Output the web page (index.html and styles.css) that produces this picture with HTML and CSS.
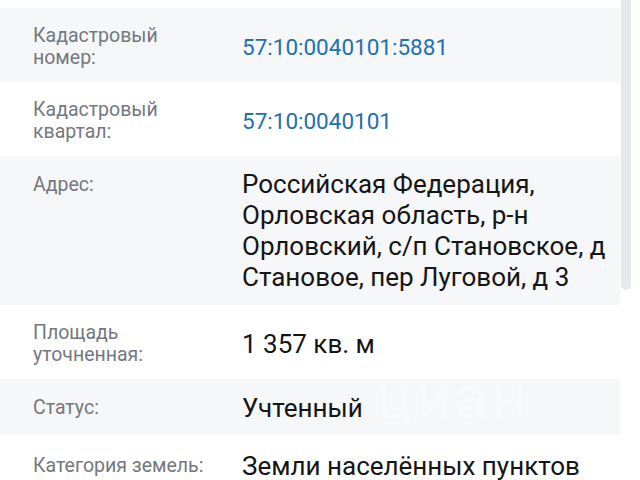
FILE: index.html
```html
<!DOCTYPE html>
<html lang="ru">

<head>
    <meta charset="UTF-8">
    <meta name="viewport" content="width=device-width, initial-scale=1.0">
    <title>Участок</title>
    <link rel="stylesheet" href="styles.css">
</head>

<body>
    <!-- Land plot details -->
    <div class="details">
        <div class="row row-gray">
            <div class="label">Кадастровый<br>номер:</div>
            <div class="value"><a href="#">57:10:0040101:5881</a></div>
        </div>
        <div class="row">
            <div class="label">Кадастровый<br>квартал:</div>
            <div class="value"><a href="#">57:10:0040101</a></div>
        </div>
        <div class="row row-gray row-top">
            <div class="label">Адрес:</div>
            <div class="value">Российская Федерация,<br>Орловская область, р-н<br>Орловский, с/п Становское, д<br>Становое, пер Луговой, д 3</div>
        </div>
        <div class="row">
            <div class="label">Площадь<br>уточненная:</div>
            <div class="value">1 357 кв. м</div>
        </div>
        <div class="row row-gray row-short">
            <div class="label">Статус:</div>
            <div class="value">Учтенный</div>
        </div>
        <div class="row">
            <div class="label">Категория земель:</div>
            <div class="value">Земли населённых пунктов</div>
        </div>
    </div>

    <!-- Watermark -->
    <div class="watermark">циан</div>

    <!-- Scrollbar -->
    <div class="scrollbar"></div>
</body>

</html>
```
FILE: styles.css
```css
body {
    font-family: Roboto, 'Noto Sans', sans-serif;
    background-color: white;
    margin: 0;
    padding: 8px 0 0 0;
    overflow: hidden;
}

.details {
    width: 620px;
}

.row {
    display: flex;
    align-items: center;
    padding: 17px 0 13px 33px;
}

.row-gray {
    background-color: #f5f7f9;
}

.row-top {
    align-items: flex-start;
    padding: 13px 0 12px 33px;
}

.row-short {
    padding: 15px 0 13px 33px;
}

.label {
    width: 209px;
    flex-shrink: 0;
    font-size: 19.5px;
    line-height: 22px;
    color: #737880;
}

.row-top .label {
    padding-top: 5px;
}

.value {
    width: 378px;
    font-size: 26px;
    line-height: 28px;
    color: #151515;
    white-space: nowrap;
}

.row-top .value {
    line-height: 31px;
}

.value a {
    font-size: 22.5px;
    line-height: 30px;
    color: #2270b0;
    text-decoration: none;
}

.watermark {
    position: absolute;
    left: 376px;
    top: 360px;
    font-size: 62px;
    letter-spacing: 3px;
    color: rgba(255, 255, 255, 0.6);
    text-shadow: 0 0 1px rgba(0, 0, 0, 0.03);
}

.scrollbar {
    position: absolute;
    top: 0;
    left: 621px;
    width: 10px;
    height: 290px;
    background-color: #e6e8ec;
    border-radius: 0 0 5px 5px;
}
```
